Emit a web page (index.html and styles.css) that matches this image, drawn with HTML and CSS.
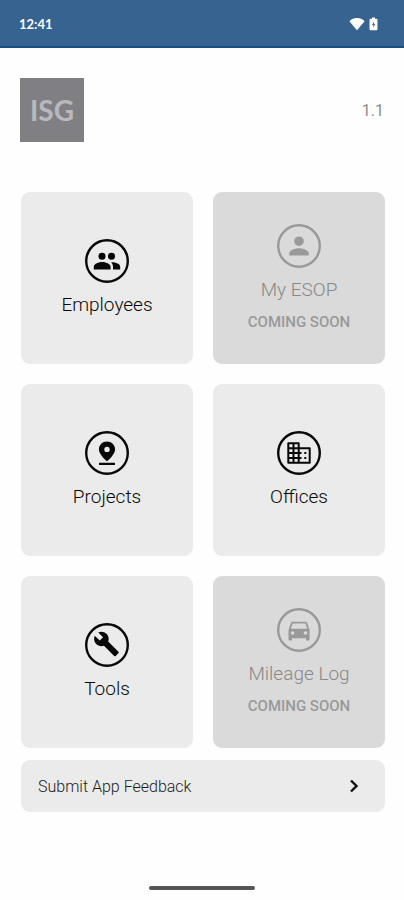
FILE: index.html
```html
<!DOCTYPE html>
<html lang="en">
<head>
<meta charset="utf-8">
<meta name="viewport" content="width=device-width, initial-scale=1">
<title>ISG</title>
<link rel="stylesheet" href="styles.css">
</head>
<body>
<div class="status-bar">
  <span class="time">12:41</span>
  <span class="status-icons">
    <svg width="16" height="14" viewBox="0 0 16 14" aria-hidden="true"><path fill="#fff" d="M8 13.200 0.600 4.400C0.400 3.400 4 1 8 1s7.600 2.400 7.400 3.400z"/></svg>
    <svg width="9" height="14" viewBox="0 0 9 14" aria-hidden="true"><path fill="#fff" d="M3 0.500h3v1.300h1.200c.8 0 1.300.5 1.300 1.200v9c0 .8-.5 1.300-1.300 1.300H1.800C1 13.300.5 12.800.5 12V3c0-.7.5-1.200 1.300-1.200H3z"/><path fill="#59718f" d="M5 4.600 2.900 8.100h1.300v2.600l2.100-3.600H5z"/></svg>
  </span>
</div>
<header class="header">
  <div class="logo">ISG</div>
  <span class="version">1.1</span>
</header>
<main class="content">
  <nav class="tiles">
    <button class="tile" type="button">
      <svg class="tile-icon" viewBox="0 0 44 44" aria-hidden="true"><circle class="ring" cx="22" cy="22" r="20.800"/><circle cx="17" cy="17.200" r="3.500"/><circle cx="26.500" cy="17.200" r="3.500"/><path d="M8.800 30.500v-2.700c0-3.100 5.400-4.700 8.400-4.700s8.400 1.600 8.400 4.700v2.700zM26.100 23.300c3.500-.4 9.100 1.300 9.100 4.500v2.700h-7.200v-2.700c0-1.900-.8-3.400-1.900-4.500z"/></svg>
      <span class="label">Employees</span>
    </button>
    <button class="tile" type="button" disabled>
      <svg class="tile-icon" viewBox="0 0 44 44" aria-hidden="true"><circle class="ring" cx="22" cy="22" r="20.800"/><circle cx="22" cy="17.200" r="4.800"/><path d="M12.300 31.500v-2.200c0-3.300 6.400-5 9.700-5s9.700 1.700 9.700 5v2.200z"/></svg>
      <span class="label">My ESOP</span>
      <span class="note">COMING SOON</span>
    </button>
    <button class="tile" type="button">
      <svg class="tile-icon" viewBox="0 0 44 44" aria-hidden="true"><circle class="ring" cx="22" cy="22" r="20.800"/><path fill-rule="evenodd" d="M22 10.500c4.500 0 8.100 3.400 8.100 8 0 5.300-8.100 11.800-8.100 11.800s-8.100-6.500-8.100-11.800c0-4.600 3.600-8 8.100-8zm0 5.200a2.700 2.700 0 1 0 0 5.400 2.700 2.700 0 0 0 0-5.400zM14 31.800h16v2.200H14z"/></svg>
      <span class="label">Projects</span>
    </button>
    <button class="tile" type="button">
      <svg class="tile-icon" viewBox="0 0 44 44" aria-hidden="true"><circle class="ring" cx="22" cy="22" r="20.800"/><g fill="none" stroke="currentColor" stroke-width="2"><path stroke-linejoin="round" d="M11.300 12.300h10.400v4.900h11v14.500H11.300z"/><path d="M16.500 12.300v19.400M21.700 17v14.700M11.300 17.200h10.400M11.300 22h13.200M11.300 26.900h13.200"/><path d="M27.300 22h2M27.300 26.900h2"/></g></svg>
      <span class="label">Offices</span>
    </button>
    <button class="tile" type="button">
      <svg class="tile-icon" viewBox="0 0 44 44" aria-hidden="true"><circle class="ring" cx="22" cy="22" r="20.800"/><path transform="translate(8 7.500) scale(1.120)" d="M22.700 19l-9.100-9.100c.9-2.300.4-5-1.500-6.900-2-2-5-2.400-7.400-1.300L9 6 6 9 1.600 4.700C.4 7.100.9 10.100 2.900 12.100c1.900 1.900 4.600 2.400 6.900 1.500l9.100 9.100c.4.4 1 .4 1.400 0l2.300-2.300c.5-.4.5-1.100.1-1.400z"/></svg>
      <span class="label">Tools</span>
    </button>
    <button class="tile" type="button" disabled>
      <svg class="tile-icon" viewBox="0 0 44 44" aria-hidden="true"><circle class="ring" cx="22" cy="22" r="20.800"/><path transform="translate(8 8) scale(1.170)" fill-rule="evenodd" d="M18.920 6.010C18.720 5.420 18.160 5 17.500 5h-11c-.66 0-1.210.42-1.420 1.010L3 12v8c0 .55.45 1 1 1h1c.55 0 1-.45 1-1v-1h12v1c0 .55.45 1 1 1h1c.55 0 1-.45 1-1v-8l-2.080-5.990zM6.500 16c-.83 0-1.500-.67-1.500-1.500S5.670 13 6.500 13s1.500.67 1.500 1.500S7.330 16 6.500 16zm11 0c-.83 0-1.500-.67-1.500-1.500s.67-1.500 1.500-1.500 1.500.67 1.500 1.500-.67 1.500-1.500 1.500zM5 11l1.500-4.500h11L19 11H5z"/></svg>
      <span class="label">Mileage Log</span>
      <span class="note">COMING SOON</span>
    </button>
  </nav>
  <button class="feedback" type="button">
    <span>Submit App Feedback</span>
    <svg width="10" height="16" viewBox="0 0 10 16" aria-hidden="true"><path fill="none" stroke="#111" stroke-width="2.400" d="M2 2.500 7.500 8 2 13.500"/></svg>
  </button>
</main>
<div class="home-bar"></div>
</body>
</html>
```
FILE: styles.css
```css
* {
  box-sizing: border-box;
}

body {
  margin: 0;
  min-height: 100vh;
  display: flex;
  flex-direction: column;
  background: #fefefe;
  color: #080808;
  font-family: Roboto, "Liberation Sans", sans-serif;
}

button {
  border: 0;
  font: inherit;
  color: inherit;
}

.status-bar {
  display: flex;
  align-items: center;
  justify-content: space-between;
  height: 48px;
  padding: 2px 26px 0 19px;
  background: #36638f;
  border-bottom: 2px solid #174f80;
  color: #fff;
}

.time {
  font-family: Lato, sans-serif;
  font-size: 13px;
  font-weight: 700;
}

.status-icons {
  display: flex;
  align-items: center;
  gap: 4px;
}

.header {
  display: flex;
  align-items: center;
  justify-content: space-between;
  padding: 30px 20px 0;
}

.logo {
  display: flex;
  align-items: center;
  justify-content: center;
  width: 64px;
  height: 64px;
  background: #808084;
  color: #b9b9bd;
  font-family: Lato, sans-serif;
  font-size: 28px;
  font-weight: 700;
}

.version {
  color: #8c8c8c;
  font-size: 16px;
}

.content {
  padding: 50px 19px 0 21px;
}

.tiles {
  display: grid;
  grid-template-columns: 1fr 1fr;
  gap: 20px;
}

.tile {
  display: flex;
  flex-direction: column;
  align-items: center;
  justify-content: center;
  aspect-ratio: 1;
  padding: 0;
  border-radius: 9px;
  background: #ebebeb;
}

.tile:disabled {
  background: #dadada;
  color: #999;
}

.tile-icon {
  width: 44px;
  height: 44px;
  fill: currentColor;
}

.ring {
  fill: none;
  stroke: currentColor;
  stroke-width: 2.400;
}

.label {
  margin-top: 10px;
  font-size: 19px;
  font-weight: 300;
  line-height: 24px;
}

.tile:disabled .label {
  color: #888;
}

.note {
  margin-top: 10px;
  font-size: 15px;
  font-weight: 500;
  line-height: 20px;
}

.feedback {
  display: flex;
  align-items: center;
  justify-content: space-between;
  width: 100%;
  height: 52px;
  margin-top: 12px;
  padding: 0 26px 0 17px;
  border-radius: 9px;
  background: #ebebeb;
  color: #1c1c1c;
  font-size: 16px;
  font-weight: 300;
}

.home-bar {
  width: 106px;
  height: 4px;
  margin: auto auto 10px;
  border-radius: 2px;
  background: #555;
}
```
